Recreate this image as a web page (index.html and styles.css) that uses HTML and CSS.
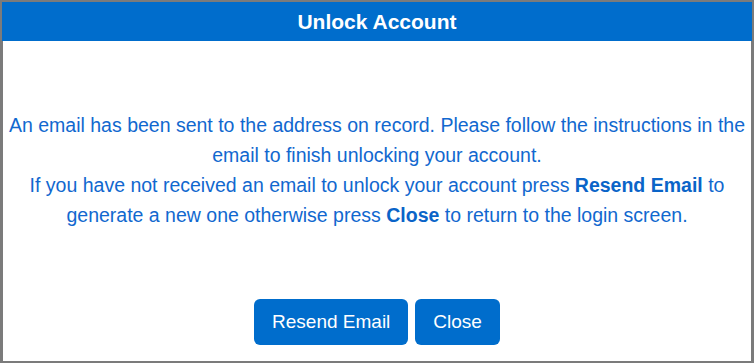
FILE: index.html
```html
<!DOCTYPE html>
<html lang="en">
<head>
    <meta charset="UTF-8">
    <meta name="viewport" content="width=device-width, initial-scale=1.0">
    <title>Unlock Account</title>
    <link rel="stylesheet" href="styles.css">
</head>
<body>
    <div class="dialog">
        <div class="dialog-header">Unlock Account</div>

        <div class="dialog-body">
            <p class="message">
                An email has been sent to the address on record. Please follow the instructions in the email to finish unlocking your account.<br>
                If you have not received an email to unlock your account press <b>Resend Email</b> to generate a new one otherwise press <b>Close</b> to return to the login screen.
            </p>
        </div>

        <div class="btn-container">
            <button class="btn">Resend Email</button>
            <button class="btn">Close</button>
        </div>
    </div>
</body>
</html>
```

FILE: styles.css
```css
html, body {
    margin: 0;
    height: 100%;
}

body {
    background-color: #7b7b7b;
    font-family: 'Liberation Sans', Arial, sans-serif;
    padding: 2px 3px 2px 3px;
    box-sizing: border-box;
}

.dialog {
    background-color: #ffffff;
    height: 100%;
    display: flex;
    flex-direction: column;
}

.dialog-header {
    background-color: #006dcc;
    color: #ffffff;
    font-weight: bold;
    font-size: 21px;
    text-align: center;
    height: 39px;
    line-height: 39px;
    margin: 0 -1px;
}

.dialog-body {
    flex: 1;
    padding: 69px 2px 0 2px;
}

.message {
    margin: 0;
    color: #1168cf;
    font-size: 19.5px;
    line-height: 30px;
    text-align: center;
}

.message b {
    color: #0a64c8;
}

.btn-container {
    display: flex;
    justify-content: center;
    gap: 7px;
    padding-bottom: 16px;
}

.btn {
    background-color: #006dcc;
    color: #ffffff;
    border: none;
    border-radius: 6px;
    font-family: 'Liberation Sans', Arial, sans-serif;
    font-size: 19px;
    height: 46px;
    padding: 0 18px;
    cursor: pointer;
}
```
